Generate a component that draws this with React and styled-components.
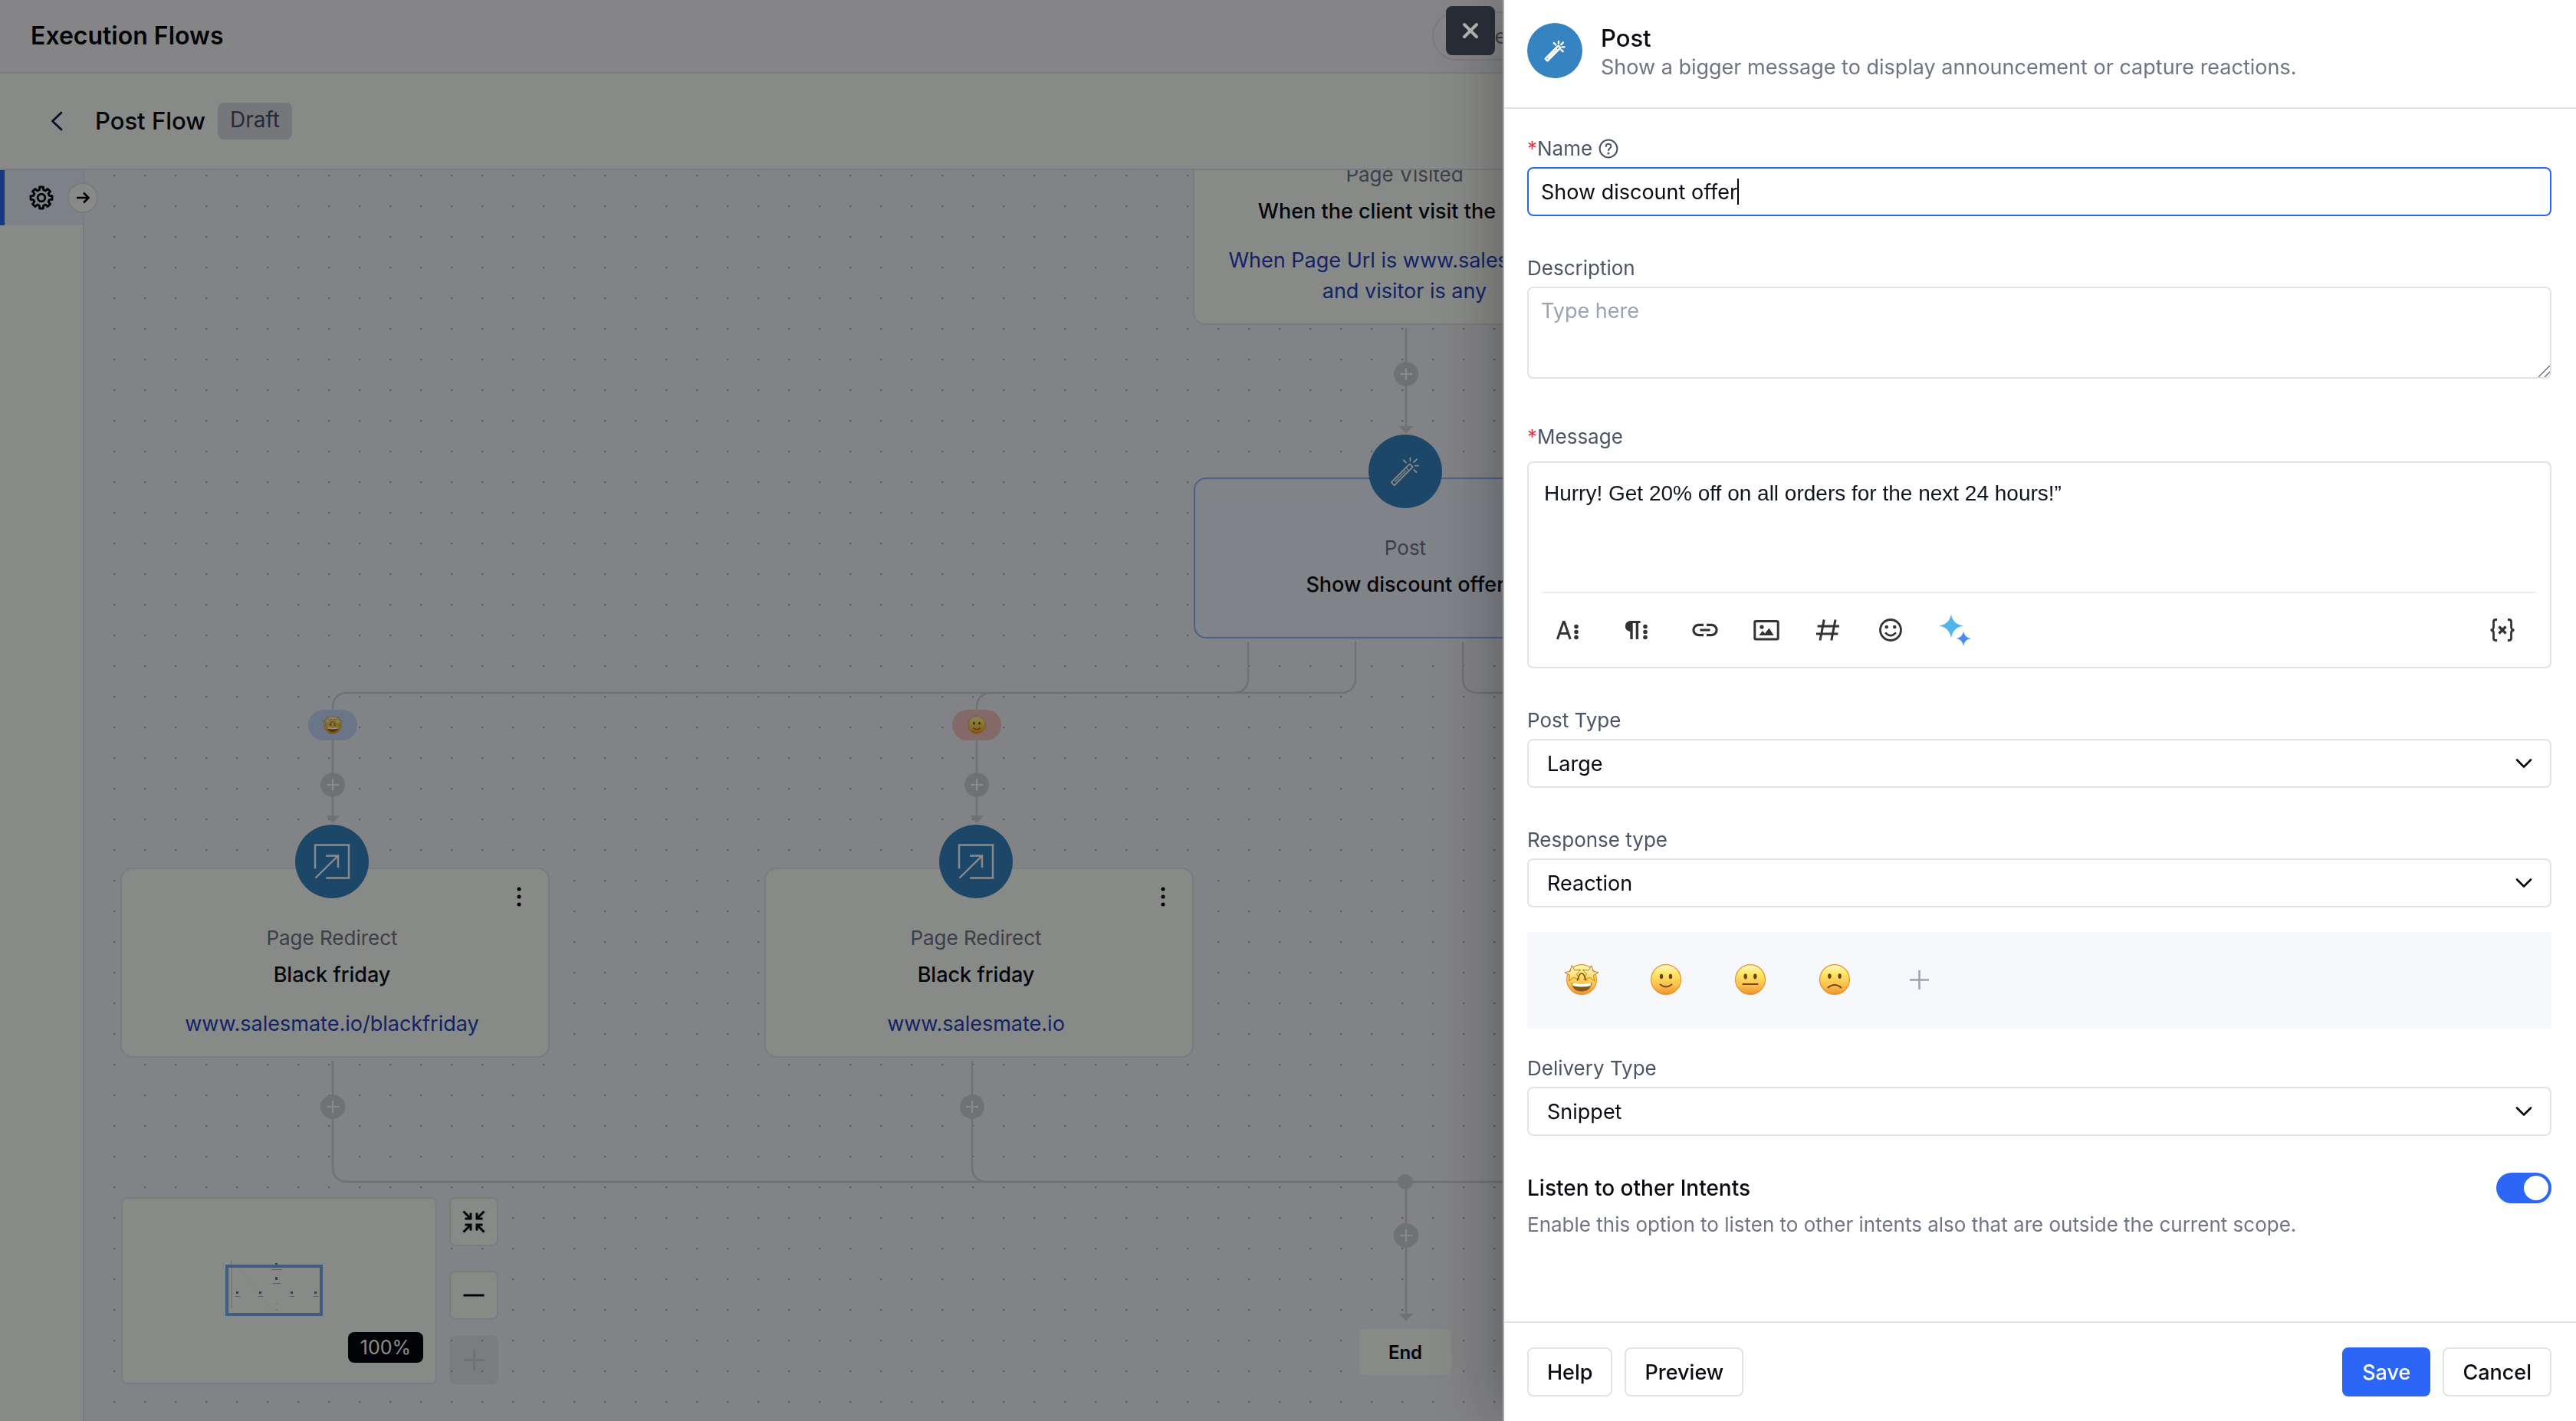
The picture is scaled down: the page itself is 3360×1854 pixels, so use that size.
import React, { useId, useState } from "react";
import styled, { createGlobalStyle, css } from "styled-components";

const color = {
  surface: "#fcfffb",
  header: "#f5f6f9",
  canvas: "#f1f2f8",
  line: "#e2e3ea",
  edge: "#cfd1d6",
  ink: "#080b12",
  label: "#4b5565",
  muted: "#6f7585",
  placeholder: "#9ba2b0",
  primary: "#2b66f7",
  link: "#2441bd",
  node: "#3584c1",
};

const GlobalStyle = createGlobalStyle`
  *, *::before, *::after { box-sizing: border-box; }
  body { margin: 0; background: ${color.canvas}; color: ${color.ink}; }
  body, button, input, select, textarea {
    font-family: Inter, "Liberation Sans", sans-serif;
    font-size: 27px;
  }
  button { cursor: pointer; }
  h1, h2, h3, p { margin: 0; }
  svg { display: block; flex: none; }
`;

/* ---------- page frame ---------- */

const Page = styled.div`
  display: flex;
  flex-direction: column;
  height: 100vh;
  overflow: hidden;
`;

const TopBar = styled.header`
  display: flex;
  align-items: center;
  height: 96px;
  padding: 0 40px;
  background: ${color.header};
  border-bottom: 2px solid ${color.line};
`;

const PageTitle = styled.h1`
  flex: 0 0 calc(100% * 5 / 9 + 6px);
  font-size: 32px;
  font-weight: 600;
  line-height: 40px;
`;

const SearchInput = styled.input`
  flex: 1;
  min-width: 0;
  height: 64px;
  padding: 0 62px;
  border: 2px solid ${color.line};
  border-radius: 32px;
  background: ${color.header};
  &::placeholder { color: ${color.muted}; }
`;

const FlowBar = styled.div`
  display: flex;
  align-items: center;
  height: 126px;
  padding: 0 48px;
  background: ${color.surface};
  border-bottom: 2px solid ${color.line};
`;

const BackButton = styled.button`
  display: grid;
  place-items: center;
  width: 52px;
  height: 52px;
  padding: 0;
  border: 0;
  background: none;
  color: #0c1a44;
`;

const FlowTitle = styled.h2`
  margin: 0 16px 0 24px;
  font-size: 31px;
  font-weight: 500;
  line-height: 40px;
`;

const Badge = styled.span`
  padding: 6px 16px 10px;
  border-radius: 8px;
  background: #dadce3;
  color: #46505f;
  font-size: 28px;
  line-height: 32px;
`;

const Workspace = styled.div`
  display: flex;
  flex: 1;
  min-height: 0;
`;

const Sidebar = styled.nav`
  position: relative;
  z-index: 1;
  width: 110px;
  background: ${color.surface};
  border-right: 2px solid ${color.line};
`;

const SideItem = styled.button`
  display: grid;
  place-items: center;
  width: 100%;
  height: 72px;
  padding: 0 6px 0 0;
  border: 0;
  border-left: 6px solid ${color.primary};
  background: #e7effb;
`;

const ExpandButton = styled.button`
  position: absolute;
  top: 16px;
  right: -20px;
  display: grid;
  place-items: center;
  width: 40px;
  height: 40px;
  padding: 0;
  border: 2px solid ${color.line};
  border-radius: 50%;
  background: ${color.surface};
`;

/* ---------- flow canvas ---------- */

const Canvas = styled.main`
  position: relative;
  flex: 1;
  overflow: hidden;
  background: ${color.canvas};
`;

const Edges = styled.svg`
  position: absolute;
  inset: 0;
  width: 100%;
  height: 100%;
`;

const NodeCard = styled.article`
  position: absolute;
  left: ${(p) => p.$x}px;
  top: ${(p) => p.$y}px;
  display: flex;
  flex-direction: column;
  align-items: center;
  width: 560px;
  padding: 72px 8px 22px 0;
  border: 2px solid ${(p) => (p.$active ? "#8fb2fb" : color.line)};
  border-radius: 16px;
  background: ${(p) => (p.$active ? "#ecf2fb" : color.surface)};
  text-align: center;
  ${(p) => p.$active && css`padding-bottom: 48px;`}
`;

const NodeIcon = styled.span`
  position: absolute;
  top: -58px;
  left: 226px;
  display: grid;
  place-items: center;
  width: 96px;
  height: 96px;
  border-radius: 50%;
  background: ${color.node};
`;

const NodeMenu = styled.button`
  position: absolute;
  top: 18px;
  right: 20px;
  display: grid;
  place-items: center;
  width: 36px;
  height: 36px;
  padding: 0;
  border: 0;
  background: none;
`;

const NodeKind = styled.span`
  margin-bottom: 10px;
  color: ${color.muted};
  font-size: 26px;
  line-height: 36px;
`;

const NodeTitle = styled.h3`
  font-size: 27px;
  font-weight: 500;
  line-height: 40px;
`;

const NodeLink = styled.p`
  width: 480px;
  margin-top: 24px;
  color: ${color.link};
  line-height: 40px;
`;

const ReactionPill = styled.span`
  position: absolute;
  left: ${(p) => p.$x}px;
  top: ${(p) => p.$y}px;
  display: grid;
  place-items: center;
  width: 64px;
  height: 40px;
  border-radius: 20px;
  background: ${(p) => p.$tint};
`;

const EndNode = styled.div`
  position: absolute;
  left: 1663px;
  top: 1512px;
  width: 120px;
  padding-top: 2px;
  border-radius: 8px;
  background: ${color.surface};
  font-size: 24px;
  font-weight: 600;
  line-height: 58px;
  text-align: center;
`;

const MapDock = styled.aside`
  position: absolute;
  left: 48px;
  bottom: 48px;
  display: flex;
  gap: 16px;
  height: 244px;
`;

const MiniMap = styled.div`
  position: relative;
  display: flex;
  justify-content: flex-end;
  align-items: flex-end;
  width: 412px;
  padding: 0 16px 26px;
  border: 2px solid ${color.line};
  border-radius: 8px;
  background: ${color.surface};
`;

const MapDrawing = styled.svg`
  position: absolute;
  inset: 0;
`;

const ZoomLabel = styled.span`
  padding: 0 16px;
  border-radius: 8px;
  background: #05070d;
  color: #fff;
  font-size: 25px;
  line-height: 40px;
`;

const DockButtons = styled.div`
  display: flex;
  flex-direction: column;
  justify-content: space-between;
`;

const ZoomButtons = styled.div`
  display: flex;
  flex-direction: column;
  gap: 20px;
`;

const DockButton = styled.button`
  display: grid;
  place-items: center;
  width: 64px;
  height: 64px;
  padding: 0;
  border: 2px solid ${color.line};
  border-radius: 8px;
  background: ${color.surface};
  color: ${color.ink};
  &:disabled {
    border-color: transparent;
    background: rgba(200, 202, 210, 0.3);
    color: ${color.edge};
  }
`;

const Backdrop = styled.div`
  position: fixed;
  inset: 0;
  z-index: 2;
  background: rgba(0, 0, 0, 0.46);
`;

/* ---------- drawer ---------- */

const Drawer = styled.section`
  position: fixed;
  top: 0;
  right: 0;
  bottom: 0;
  z-index: 3;
  display: flex;
  flex-direction: column;
  width: calc(100% * 5 / 12);
  border-left: 2px solid #a9aaad;
  background: #fff;
  box-shadow: 0 0 90px rgba(0, 0, 0, 0.35);
`;

const CloseButton = styled.button`
  position: absolute;
  top: 8px;
  right: 100%;
  display: grid;
  place-items: center;
  width: 64px;
  height: 64px;
  margin-right: 12px;
  padding: 0;
  border: 0;
  border-radius: 8px;
  background: #272b36;
  color: #adadae;
`;

const DrawerHeader = styled.header`
  display: flex;
  align-items: center;
  gap: 24px;
  height: 142px;
  padding: 0 30px 8px;
  border-bottom: 2px solid ${color.line};
`;

const HeaderIcon = styled.span`
  display: grid;
  place-items: center;
  width: 72px;
  height: 72px;
  border-radius: 50%;
  background: ${color.node};
`;

const HeaderText = styled.div`
  padding-top: 6px;
`;

const DrawerTitle = styled.h2`
  font-size: 31px;
  font-weight: 500;
  line-height: 38px;
`;

const DrawerSubtitle = styled.p`
  color: ${color.muted};
  line-height: 38px;
`;

const DrawerBody = styled.form`
  display: flex;
  flex: 1;
  flex-direction: column;
  min-height: 0;
  padding: 36px 32px 0 30px;
  overflow: hidden;
`;

const Field = styled.div`
  display: flex;
  flex-direction: column;
  gap: ${(p) => p.$gap || 8}px;
  margin-bottom: ${(p) => p.$after || 52}px;
`;

const FieldLabel = styled.label`
  display: flex;
  align-items: center;
  color: ${color.label};
  font-size: 26px;
  line-height: 32px;
  svg { margin-left: 8px; }
`;

const Required = styled.span`
  color: #e0364c;
`;

const box = css`
  border: 2px solid ${color.line};
  border-radius: 8px;
  background: #fff;
  color: ${color.ink};
`;

const FocusedBox = styled.div`
  ${box}
  display: flex;
  align-items: center;
  height: 64px;
  padding: 0 16px;
  border-color: ${color.primary};
`;

const NameInput = styled.input`
  field-sizing: content;
  padding: 0;
  border: 0;
  outline: 0;
  background: none;
  color: ${color.ink};
`;

const Caret = styled.span`
  width: 2px;
  height: 34px;
  background: #000;
`;

const DescriptionInput = styled.textarea`
  ${box}
  display: block;
  height: 120px;
  padding: 10px 16px;
  line-height: 40px;
  &::placeholder { color: ${color.placeholder}; opacity: 1; }
  &::-webkit-resizer {
    background: linear-gradient(
      135deg,
      transparent 0 46%, #55585e 48% 52%, transparent 54% 73%,
      #55585e 75% 79%, transparent 81%
    );
  }
`;

const Editor = styled.div`
  ${box}
  padding: 22px 18px 0;
`;

const MessageInput = styled.textarea`
  display: block;
  width: 100%;
  height: 146px;
  padding: 0 2px;
  border: 0;
  outline: 0;
  resize: none;
  background: none;
  color: #10151f;
  font-family: "Liberation Sans", Arial, sans-serif;
  font-size: 28px;
  line-height: 36px;
`;

const Toolbar = styled.div`
  display: flex;
  align-items: center;
  gap: 40px;
  height: 98px;
  padding: 0 24px 0 12px;
  border-top: 2px solid #ededee;
`;

const ToolGroup = styled.div`
  display: flex;
  gap: ${(p) => p.$gap}px;
  &:last-child { margin-left: auto; }
`;

const ToolButton = styled.button`
  width: 40px;
  height: 48px;
  padding: 0;
  border: 0;
  background: none;
  color: #333;
`;

const SelectBox = styled.div`
  display: grid;
  align-items: center;
  > * { grid-area: 1 / 1; }
  > svg { justify-self: end; margin-right: 24px; pointer-events: none; }
`;

const Select = styled.select`
  ${box}
  width: 100%;
  height: 64px;
  padding: 0 24px;
  appearance: none;
`;

const Reactions = styled.div`
  display: flex;
  align-items: center;
  gap: 62px;
  height: 126px;
  margin-bottom: 36px;
  padding: 0 47px 2px;
  background: #f6f8fc;
`;

const ReactionButton = styled.button`
  display: grid;
  place-items: center;
  width: 48px;
  height: 48px;
  padding: 0;
  border: 0;
  background: none;
`;

const SwitchRow = styled.div`
  display: flex;
  align-items: center;
  justify-content: space-between;
  margin-bottom: 12px;
`;

const SwitchLabel = styled.label`
  font-size: 28px;
  font-weight: 500;
  line-height: 40px;
`;

const Switch = styled.input`
  display: flex;
  align-items: center;
  width: 72px;
  height: 40px;
  margin: 0;
  padding: 4px;
  border-radius: 20px;
  appearance: none;
  background: #c9ccd4;
  &::after {
    content: "";
    width: 32px;
    height: 32px;
    border-radius: 50%;
    background: #fff;
  }
  &:checked { justify-content: flex-end; background: ${color.primary}; }
`;

const Hint = styled.p`
  color: ${color.muted};
  font-size: 26px;
  line-height: 32px;
`;

const DrawerFooter = styled.footer`
  display: flex;
  gap: 16px;
  padding: 32px 32px 32px 30px;
  border-top: 2px solid ${color.line};
`;

const Action = styled.button`
  height: 64px;
  padding: 0 24px;
  border: 2px solid ${(p) => (p.$primary ? color.primary : color.line)};
  border-radius: 8px;
  background: ${(p) => (p.$primary ? color.primary : "#fff")};
  color: ${(p) => (p.$primary ? "#fff" : color.ink)};
  font-weight: 500;
  ${(p) => p.$push && css`margin-left: auto;`}
`;

/* ---------- icons ---------- */

const Icon = ({ w = 24, h = w, sw = 2.5, children, ...rest }) => (
  <svg
    width={w}
    height={h}
    viewBox={`${-w / 2} ${-h / 2} ${w} ${h}`}
    fill="none"
    stroke="currentColor"
    strokeWidth={sw}
    aria-hidden="true"
    {...rest}
  >
    {children}
  </svg>
);

const Wand = ({ size = 44, sw = 1.8, ...rest }) => (
  <svg width={size} height={size} viewBox="-22 -22 44 44" fill="none" stroke="#fff" strokeWidth={sw} strokeLinecap="round" aria-hidden="true" {...rest}>
    <g transform="rotate(-45)">
      <rect x="-23" y="-2.8" width="34" height="5.6" rx="0.6" />
      <path d="M-19 0H1M4 -2.7V2.7" strokeWidth={sw * 0.7} />
    </g>
    <path d="M-2.3 -14.7L1 -11.3M6.3 -17.7V-13.7M14.7 -15.7L11 -12M12.7 -7.3H17M11.3 -2L14.3 1" />
  </svg>
);

const Redirect = () => (
  <Icon w={48} sw={2.4} style={{ color: "#fff" }}>
    <path d="M-22 9.5V-21.5H22V21.5H-8M-21.5 21.5L8 -7.5M-8 -7.5H8V8" />
  </Icon>
);

const gearPath = (() => {
  const teeth = 8;
  const points = [];
  for (let i = 0; i < teeth; i += 1) {
    const mid = (i * 2 * Math.PI) / teeth - Math.PI / 2;
    [[-0.25, 10.6], [-0.17, 14.2], [0.17, 14.2], [0.25, 10.6]].forEach(([da, r]) => {
      points.push(`${(Math.cos(mid + da) * r).toFixed(2)} ${(Math.sin(mid + da) * r).toFixed(2)}`);
    });
  }
  return `M${points.join("L")}Z`;
})();

const Gear = () => (
  <Icon w={34} sw={2.8} strokeLinejoin="round">
    <path d={gearPath} />
    <circle r="4.8" />
  </Icon>
);

const Plus = ({ size = 26, ...rest }) => (
  <Icon w={size} {...rest}>
    <path d={`M${-size / 2} 0H${size / 2}M0 ${-size / 2}V${size / 2}`} />
  </Icon>
);

const Chevron = () => (
  <Icon w={24} sw={2.6} strokeLinecap="round" strokeLinejoin="round">
    <path d="M-9 -4.5L0 4.5L9 -4.5" />
  </Icon>
);

const faces = {
  smile: (
    <>
      <ellipse cx="-6" cy="-4" rx="2.2" ry="3.2" />
      <ellipse cx="6" cy="-4" rx="2.2" ry="3.2" />
      <path d="M-7.5 6.5Q0 12.5 7.5 6.5" fill="none" stroke="#7a4310" strokeWidth="1.8" strokeLinecap="round" />
    </>
  ),
  neutral: (
    <>
      <ellipse cx="-6.3" cy="-4" rx="2.2" ry="3.4" />
      <ellipse cx="6.3" cy="-4" rx="2.2" ry="3.4" />
      <path d="M-9.5 6H9.5" fill="none" stroke="#7a4310" strokeWidth="2.2" strokeLinecap="round" />
    </>
  ),
  frown: (
    <>
      <ellipse cx="-6.6" cy="-4.4" rx="2.2" ry="3.4" />
      <ellipse cx="6.6" cy="-4.4" rx="2.2" ry="3.4" />
      <path d="M-8.5 10.5Q0 3.5 8.5 10.5" fill="none" stroke="#7a4310" strokeWidth="1.8" strokeLinecap="round" />
    </>
  ),
};

const star = "M0 -10.5L2.9 -3.6L10.6 -3.2L4.7 1.6L7.4 9.6L0 5.4L-6.6 9.2L-4.4 1.8L-10.4 -2.6L-3 -3.4Z";

const Emoji = ({ face, size = 48 }) => {
  const id = useId().replace(/[^a-zA-Z0-9]/g, "");
  return (
    <svg width={size} height={size} viewBox="-24 -24 48 48" fill="#6d3f12" role="img" aria-label={face}>
      <defs>
        <linearGradient id={`skin${id}`} x1="0" y1="0" x2="0" y2="1">
          <stop offset="0" stopColor="#fff9c0" />
          <stop offset="0.3" stopColor="#fde766" />
          <stop offset="0.7" stopColor="#f9c04a" />
          <stop offset="1" stopColor="#ef9233" />
        </linearGradient>
        <linearGradient id={`gold${id}`} x1="0" y1="0" x2="0" y2="1">
          <stop offset="0" stopColor="#fffbd8" />
          <stop offset="1" stopColor="#fbd24c" />
        </linearGradient>
      </defs>
      <circle r="19.4" fill={`url(#skin${id})`} stroke="#e8922f" strokeWidth="1.2" />
      {face === "star" ? (
        <>
          <path d="M-13.5 4Q0 7 13.5 4Q11.5 15.5 0 15.5Q-11.5 15.5 -13.5 4Z" fill="#8a5a14" />
          <path d="M-12.5 4.2Q0 7 12.5 4.2L11.5 8.2Q0 10.800 -11.5 8.2Z" fill="#fff" />
          <g fill={`url(#gold${id})`} stroke="#b87a22" strokeWidth="0.9" strokeLinejoin="round">
            <path d={star} transform="translate(-11.4 -8) rotate(-8)" />
            <path d={star} transform="translate(11.4 -8) rotate(8) scale(-1 1)" />
          </g>
          <path d="M-6 1.5L-2.6 -6.5Q0 -9.5 2.6 -6.5L6 1.5" fill="none" stroke="#7a4310" strokeWidth="1.4" />
        </>
      ) : (
        faces[face]
      )}
    </svg>
  );
};

const Tool = ({ label, children, ...rest }) => (
  <ToolButton type="button" aria-label={label}>
    <Icon w={40} h={48} sw={3} {...rest}>{children}</Icon>
  </ToolButton>
);

const dots = [-4.5, 2.5, 9.5].map((y) => (
  <circle key={y} cx="12" cy={y} r="2.8" fill="currentColor" stroke="none" />
));

/* ---------- flow data ---------- */

const nodes = [
  { id: "visited", x: 1446, y: -86, kind: "Page Visited", title: "When the client visit the page", link: "When Page Url is www.salesmate.io and visitor is any" },
  { id: "post", x: 1447, y: 401, kind: "Post", title: "Show discount offer", active: true },
  { id: "redirect-1", x: 47, y: 910, kind: "Page Redirect", title: "Black friday", link: "www.salesmate.io/blackfriday", menu: true },
  { id: "redirect-2", x: 887, y: 910, kind: "Page Redirect", title: "Black friday", link: "www.salesmate.io", menu: true },
];

const joints = [[1724, 266], [324, 802], [1164, 802], [324, 1222], [1158, 1222], [1724, 1390]];
const arrows = [[1724, 334], [324, 842], [1164, 842], [1724, 1492]];

const FlowEdges = () => (
  <Edges aria-hidden="true">
    <defs>
      <pattern id="grid-dots" x="38" y="6" width="40" height="40" patternUnits="userSpaceOnUse">
        <rect width="2" height="2" fill="#a3a5ad" />
      </pattern>
    </defs>
    <rect width="100%" height="100%" fill="url(#grid-dots)" />
    <g fill="none" stroke={color.edge} strokeWidth="2.4">
      <path d="M1724 206V336" />
      <path d="M1518 615V662Q1518 682 1498 682H344Q324 682 324 702V844" />
      <path d="M1658 615V662Q1658 682 1638 682H1184Q1164 682 1164 702V844" />
      <path d="M1798 615V662Q1798 682 1818 682H3240" />
      <path d="M324 1162V1300Q324 1320 344 1320H3240" />
      <path d="M1158 1162V1300Q1158 1320 1178 1320" />
      <path d="M1724 1320V1494" />
    </g>
    <circle cx="1723" cy="1320" r="10" fill={color.edge} />
    {arrows.map(([x, y]) => (
      <path key={`${x}-${y}`} d={`M${x - 9} ${y}H${x + 9}L${x} ${y + 10}Z`} fill={color.edge} />
    ))}
    {joints.map(([x, y]) => (
      <g key={`${x}-${y}`}>
        <circle cx={x} cy={y} r="16" fill={color.edge} />
        <path d={`M${x - 8} ${y}H${x + 8}M${x} ${y - 8}V${y + 8}`} stroke={color.surface} strokeWidth="2" />
      </g>
    ))}
  </Edges>
);

const FlowNode = ({ x, y, kind, title, link, active, menu }) => (
  <NodeCard $x={x} $y={y} $active={active}>
    <NodeIcon>{active ? <Wand /> : <Redirect />}</NodeIcon>
    {menu && (
      <NodeMenu type="button" aria-label="Node menu">
        <Icon w={8} h={28} stroke="none">
          <circle cy="-10" r="2.5" fill="currentColor" />
          <circle r="2.5" fill="currentColor" />
          <circle cy="10" r="2.5" fill="currentColor" />
        </Icon>
      </NodeMenu>
    )}
    <NodeKind>{kind}</NodeKind>
    <NodeTitle>{title}</NodeTitle>
    {link && <NodeLink>{link}</NodeLink>}
  </NodeCard>
);

const MapPreview = () => (
  <MapDrawing width="408" height="240" aria-hidden="true">
    <path d="M142 81V142" stroke="#dfe1e6" strokeWidth="2" />
    <path d="M152 90L200 152M142 152H200" stroke="#f1f3f3" fill="none" />
    <rect x="136" y="88" width="123" height="63" fill="none" stroke="#70aef2" strokeWidth="4" />
    <g stroke="#aeb2b6" strokeWidth="1">
      <path d="M194 92.500H208M196 110.500H206M147 127.500H153M177 127.500H183M218 127.500H224M249 127.500H255M200 145H202M200 137H201" />
    </g>
    <g fill={color.node}>
      <rect x="199" y="84" width="3" height="2" fill="#4d9c86" />
      <rect x="199" y="102" width="3" height="4" />
      <rect x="148" y="121" width="3" height="3" />
      <rect x="178" y="121" width="3" height="3" />
      <rect x="219" y="121" width="3" height="3" />
      <rect x="250" y="121" width="3" height="3" />
    </g>
  </MapDrawing>
);

const SelectField = ({ id, label, options, after }) => (
  <Field $after={after}>
    <FieldLabel htmlFor={id}>{label}</FieldLabel>
    <SelectBox>
      <Select id={id}>
        {options.map((o) => <option key={o}>{o}</option>)}
      </Select>
      <Chevron />
    </SelectBox>
  </Field>
);

const PostDrawer = () => {
  const [name, setName] = useState("Show discount offer");
  const [listen, setListen] = useState(true);
  return (
    <Drawer aria-label="Post settings">
      <CloseButton type="button" aria-label="Close">
        <Icon w={24} sw={4} strokeLinecap="round"><path d="M-8 -8L8 8M8 -8L-8 8" /></Icon>
      </CloseButton>
      <DrawerHeader>
        <HeaderIcon><Wand size={31} sw={3.4} /></HeaderIcon>
        <HeaderText>
          <DrawerTitle>Post</DrawerTitle>
          <DrawerSubtitle>Show a bigger message to display announcement or capture reactions.</DrawerSubtitle>
        </HeaderText>
      </DrawerHeader>
      <DrawerBody>
        <Field>
          <FieldLabel htmlFor="name">
            <Required>*</Required>Name
            <Icon w={26} sw={2} strokeLinecap="round">
              <circle r="11.4" />
              <path d="M-3.2 -3C-3.2 -7.2 3.4 -7.2 3.4 -3C3.4 -0.4 0 -0.4 0 2.2" />
              <circle cy="6" r="0.6" fill="currentColor" />
            </Icon>
          </FieldLabel>
          <FocusedBox>
            <NameInput id="name" value={name} onChange={(e) => setName(e.target.value)} />
            <Caret />
          </FocusedBox>
        </Field>
        <Field $after={60}>
          <FieldLabel htmlFor="description">Description</FieldLabel>
          <DescriptionInput id="description" placeholder="Type here" />
        </Field>
        <Field $gap={16}>
          <FieldLabel htmlFor="message"><Required>*</Required>Message</FieldLabel>
          <Editor>
            <MessageInput id="message" defaultValue="Hurry! Get 20% off on all orders for the next 24 hours!”" />
            <Toolbar>
              <ToolGroup $gap={50}>
                <Tool label="Text format">
                  <path d="M-12.6 12L-4.8 -10.5H-3.6L4.2 12M-9.8 4.5H1.4" />
                  {dots}
                </Tool>
                <Tool label="Paragraph format">
                  <path d="M5.6 -10.5H-8.5" />
                  <path d="M-7.2 -12H-5V2H-7.2A7 7 0 0 1 -7.2 -12Z" fill="currentColor" stroke="none" />
                  <path d="M-6 -11V12M1.4 -11V12" strokeWidth="3.4" />
                  {dots}
                </Tool>
                <Tool label="Insert link" sw={3.2}>
                  <path d="M-2 -6.6H-8.5A6.6 6.6 0 0 0 -8.5 6.6H-2M2 -6.6H8.5A6.6 6.6 0 0 1 8.5 6.6H2M-6.6 0H6.6" />
                </Tool>
              </ToolGroup>
              <ToolGroup $gap={40}>
                <Tool label="Insert image">
                  <rect x="-15.2" y="-11.5" width="30.4" height="23.4" rx="1.5" />
                  <circle cx="-6" cy="-4" r="2.6" fill="currentColor" stroke="none" />
                  <path d="M-9.6 7L-5 1L-2 4.4L3.6 -2.4L9.6 7Z" fill="currentColor" stroke="none" />
                </Tool>
                <Tool label="Insert tag">
                  <path d="M-4.8 -13.5L-10 13.5M10 -13.5L4.8 13.5M-13.4 -5H15M-15 5H13.4" />
                </Tool>
                <Tool label="Insert emoji" sw={2.8}>
                  <circle cx="2" r="13.5" />
                  <circle cx="-3.2" cy="-4" r="2.3" fill="currentColor" stroke="none" />
                  <circle cx="7.2" cy="-4" r="2.3" fill="currentColor" stroke="none" />
                  <path d="M-5 3.4Q2 11 9 3.4" strokeWidth="2.4" />
                </Tool>
                <Tool label="AI assistant" stroke="none" style={{ overflow: "visible" }}>
                  <path d="M1 -21Q3 -7.5 17 -5.5Q3 -3.5 1 11Q-1 -3.5 -15 -5.5Q-1 -7.5 1 -21Z" fill="#52b6ea" />
                  <path d="M17 1.5Q18.2 9.8 27 11Q18.2 12.2 17 21Q15.8 12.2 7.5 11Q15.8 9.8 17 1.5Z" fill="#4a8bf2" />
                </Tool>
              </ToolGroup>
              <ToolGroup $gap={0}>
                <Tool label="Insert variable" sw={2.8}>
                  <path d="M-7 -13.5H-9Q-11.5 -13.5 -11.5 -10.5V-4Q-11.5 0 -15.5 0Q-11.5 0 -11.5 4V10.5Q-11.5 13.5 -9 13.5H-7M7 -13.5H9Q11.5 -13.5 11.5 -10.5V-4Q11.5 0 15.5 0Q11.5 0 11.5 4V10.5Q11.5 13.5 9 13.5H7" />
                  <path d="M-4.5 -4.5L4.5 4.5M4.5 -4.5L-4.5 4.5" strokeWidth="3.4" />
                </Tool>
              </ToolGroup>
            </Toolbar>
          </Editor>
        </Field>
        <SelectField id="post-type" label="Post Type" options={["Large", "Small"]} />
        <SelectField id="response-type" label="Response type" options={["Reaction", "None"]} after={32} />
        <Reactions>
          {["star", "smile", "neutral", "frown"].map((face) => (
            <ReactionButton key={face} type="button" aria-label={face}><Emoji face={face} /></ReactionButton>
          ))}
          <ReactionButton type="button" aria-label="Add reaction">
            <Plus size={25} style={{ color: "#9ca3af" }} />
          </ReactionButton>
        </Reactions>
        <SelectField id="delivery-type" label="Delivery Type" options={["Snippet", "Banner"]} after={48} />
        <SwitchRow>
          <SwitchLabel htmlFor="listen">Listen to other Intents</SwitchLabel>
          <Switch id="listen" type="checkbox" role="switch" checked={listen} onChange={(e) => setListen(e.target.checked)} />
        </SwitchRow>
        <Hint>Enable this option to listen to other intents also that are outside the current scope.</Hint>
      </DrawerBody>
      <DrawerFooter>
        <Action type="button">Help</Action>
        <Action type="button">Preview</Action>
        <Action type="button" $primary $push>Save</Action>
        <Action type="button">Cancel</Action>
      </DrawerFooter>
    </Drawer>
  );
};

export default function App() {
  return (
    <>
      <GlobalStyle />
      <Page>
        <TopBar>
          <PageTitle>Execution Flows</PageTitle>
          <SearchInput type="search" aria-label="Search" placeholder="Search" />
        </TopBar>
        <FlowBar>
          <BackButton type="button" aria-label="Back">
            <Icon w={28} sw={2.8} strokeLinecap="round" strokeLinejoin="round"><path d="M6 -11L-5.5 0L6 11" /></Icon>
          </BackButton>
          <FlowTitle>Post Flow</FlowTitle>
          <Badge>Draft</Badge>
        </FlowBar>
        <Workspace>
          <Sidebar>
            <SideItem type="button" aria-label="Settings"><Gear /></SideItem>
            <ExpandButton type="button" aria-label="Expand sidebar">
              <Icon w={20} sw={2.6}><path d="M-8 0H7M1 -6.5L7.5 0L1 6.5" /></Icon>
            </ExpandButton>
          </Sidebar>
          <Canvas>
            <FlowEdges />
            {nodes.map(({ id, ...node }) => <FlowNode key={id} {...node} />)}
            <ReactionPill $x={292} $y={704} $tint="#c4daf9"><Emoji face="star" size={28} /></ReactionPill>
            <ReactionPill $x={1132} $y={704} $tint="#f3c4c1"><Emoji face="smile" size={28} /></ReactionPill>
            <EndNode>End</EndNode>
            <MapDock>
              <MiniMap>
                <MapPreview />
                <ZoomLabel>100%</ZoomLabel>
              </MiniMap>
              <DockButtons>
                <DockButton type="button" aria-label="Fit to screen">
                  <Icon w={30} sw={3}>
                    {[0, 90, 180, 270].map((a) => (
                      <path key={a} transform={`rotate(${a})`} d="M-13.5 -13.5L-4 -4M-11.5 -4H-4V-11.5" />
                    ))}
                  </Icon>
                </DockButton>
                <ZoomButtons>
                  <DockButton type="button" aria-label="Zoom out">
                    <Icon w={28} sw={3}><path d="M-13.5 0H13.5" /></Icon>
                  </DockButton>
                  <DockButton type="button" aria-label="Zoom in" disabled><Plus size={27} sw={3} /></DockButton>
                </ZoomButtons>
              </DockButtons>
            </MapDock>
          </Canvas>
        </Workspace>
      </Page>
      <Backdrop />
      <PostDrawer />
    </>
  );
}
